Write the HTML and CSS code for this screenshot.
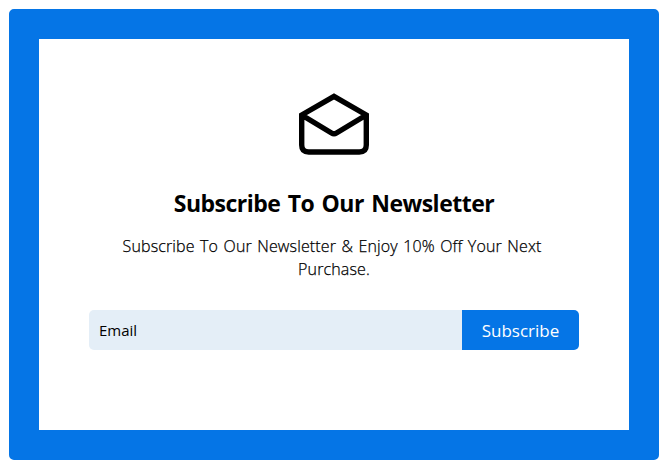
FILE: index.html
```html
<!DOCTYPE html>
<html lang="en">
<head>
<meta charset="utf-8">
<title>Newsletter</title>
<link rel="stylesheet" href="styles.css">
</head>
<body>
<main class="card">
  <svg class="icon" viewBox="0 0 70 62" aria-hidden="true">
    <path d="M2.7 22v30q0 7 7 7h50.6q7 0 7-7V22L35 3.4 2.7 22 32.5 40q2.5 1.5 5 0L67.3 22"/>
  </svg>
  <h1 class="title">Subscribe To Our Newsletter</h1>
  <p class="text"><span class="lead">Subscribe To Our Newsletter &amp; Enjoy 10% Off Your Next</span> Purchase.</p>
  <form class="form">
    <input class="email" type="email" placeholder="Email" aria-label="Email">
    <button class="submit" type="button">Subscribe</button>
  </form>
</main>
</body>
</html>
```
FILE: styles.css
```css
* {
  box-sizing: border-box;
}

body {
  margin: 0;
  padding: 9px 7px 7px 9px;
  background: #fff;
  color: #000;
  font-family: "Segoe UI", "Open Sans", "Noto Sans", sans-serif;
  overflow: hidden;
}

.card {
  display: flex;
  flex-direction: column;
  align-items: center;
  width: 650px;
  height: 451px;
  padding: 54px 50px 0;
  border: 30px solid #0575e6;
  border-radius: 5px;
}

.icon {
  width: 70px;
  height: 62px;
  flex: none;
  fill: none;
  stroke: #000;
  stroke-width: 5.4;
  stroke-linejoin: miter;
}

.title {
  margin: 32px 0 0;
  font-size: 23px;
  line-height: 32px;
  font-weight: 700;
  letter-spacing: -0.5px;
  word-spacing: 1.8px;
  white-space: nowrap;
}

.text {
  width: 440px;
  margin: 16px 0 0;
  font-size: 16px;
  line-height: 23px;
  font-weight: 300;
  letter-spacing: 0.14px;
  word-spacing: 1.1px;
  text-align: center;
  -webkit-text-stroke: 0.25px #000;
}

.lead {
  padding-right: 4px;
}

.form {
  display: flex;
  width: 490px;
  height: 40px;
  margin: 29px 0 0;
}

.email {
  flex: 1;
  min-width: 0;
  padding: 0 10px;
  border: 0;
  border-radius: 5px 0 0 5px;
  background: #e4eef7;
  font: 400 15px "Segoe UI", "Open Sans", sans-serif;
}

.email::placeholder {
  color: #000;
  opacity: 1;
}

.submit {
  width: 117px;
  padding: 0;
  border: 0;
  border-radius: 0 5px 5px 0;
  background: #0575e6;
  color: #fff;
  font: 400 17px "Segoe UI", "Open Sans", sans-serif;
}
```
